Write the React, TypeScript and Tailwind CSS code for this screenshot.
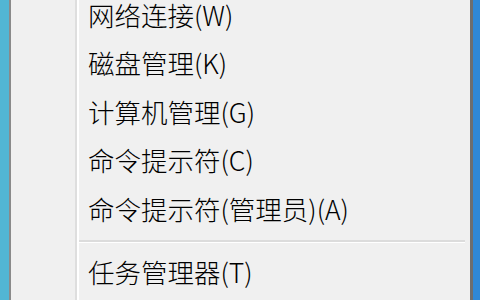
const items = [
  "网络连接(W)",
  "磁盘管理(K)",
  "计算机管理(G)",
  "命令提示符(C)",
  "命令提示符(管理员)(A)",
];

function MenuRow({ label }: { label: string }) {
  return (
    <div className="flex h-[48.4px] items-center">
      <div className="w-[64px] shrink-0 self-stretch" />
      <div className="w-[2px] shrink-0 self-stretch bg-[#dedede]" />
      <div className="w-[2px] shrink-0 self-stretch bg-white" />
      <span className="pl-[9px] text-[26.5px] font-light leading-none text-black whitespace-nowrap">{label}</span>
    </div>
  );
}

export default function App() {
  return (
    <div
      className="flex h-[300px] w-[480px] overflow-hidden bg-[#f0f0f0]"
      style={{ fontFamily: '"Noto Sans CJK SC", "Noto Sans", sans-serif' }}
    >
      {/* desktop edge */}
      <div className="w-[9px] shrink-0 bg-[#52b6d4]" />
      <div className="w-[2px] shrink-0 bg-[#8a8a8a]" />

      {/* menu */}
      <div className="flex flex-1 flex-col -mt-[9px]">
        {items.map((label) => (
          <MenuRow key={label} label={label} />
        ))}
        <div className="flex">
          <div className="w-[64px] shrink-0" />
          <div className="w-[2px] shrink-0 bg-[#dedede]" />
          <div className="w-[2px] shrink-0 bg-white" />
          <div className="flex-1 pr-[5px] pt-[7px] pb-[5px]">
            <div className="h-[2px] bg-[#dcdcdc]" />
            <div className="h-[1px] bg-white" />
          </div>
        </div>
        <MenuRow label="任务管理器(T)" />
        <div className="flex flex-1">
          <div className="w-[64px] shrink-0" />
          <div className="w-[2px] shrink-0 bg-[#dedede]" />
          <div className="w-[2px] shrink-0 bg-white" />
        </div>
      </div>

      <div className="w-[3px] shrink-0 bg-[#6e6e6e]" />
      <div className="w-[7px] shrink-0 bg-[#2f88d6]" />
    </div>
  );
}
